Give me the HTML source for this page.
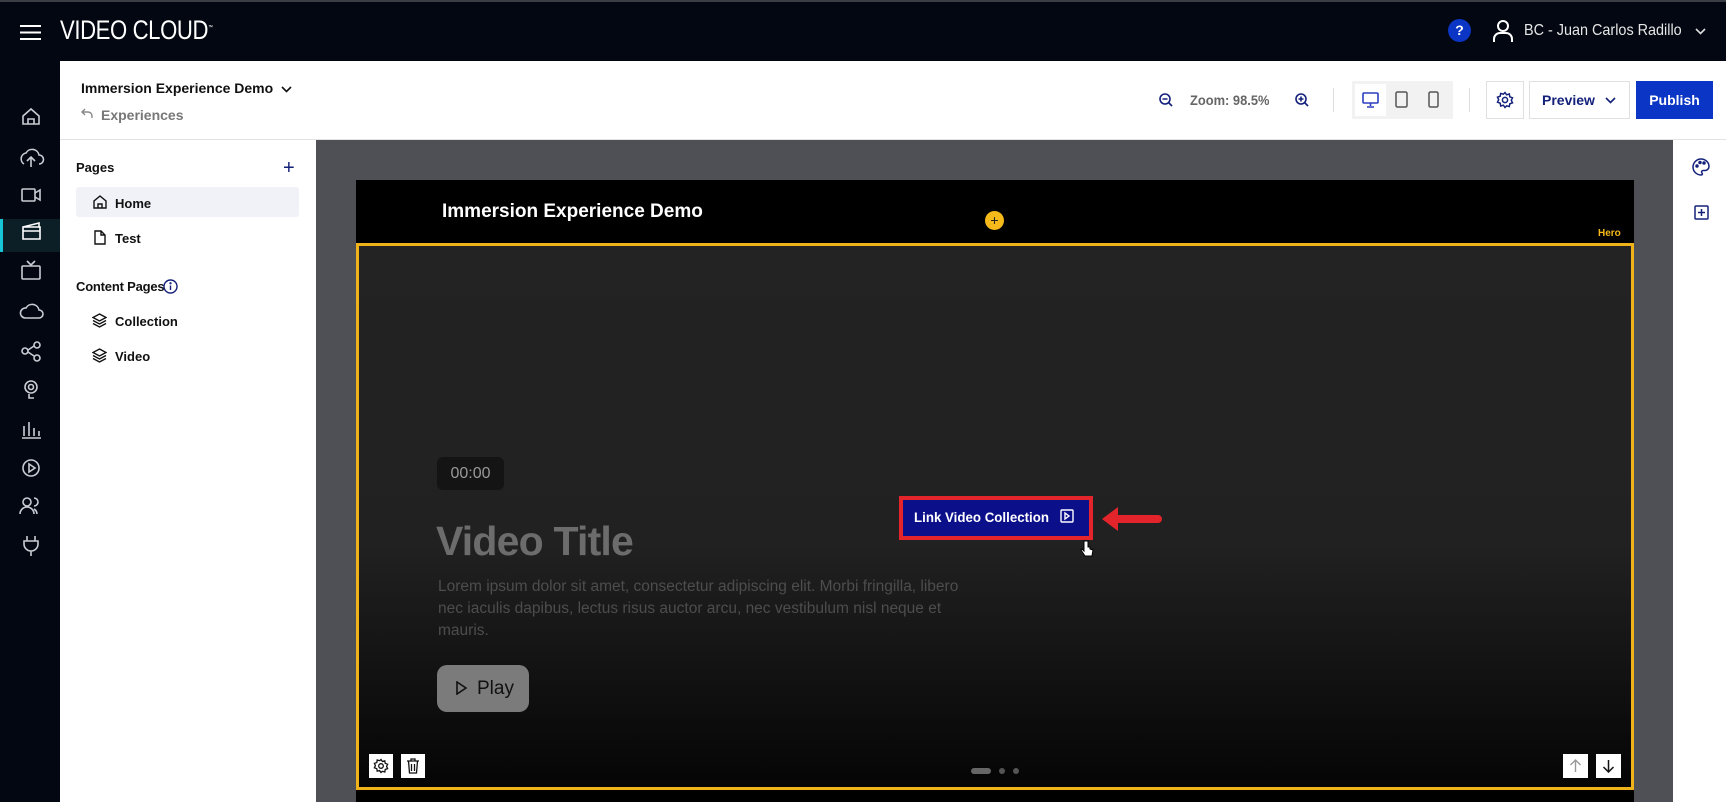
<!DOCTYPE html>
<html><head><meta charset="utf-8"><style>
*{margin:0;padding:0;box-sizing:border-box}
body{width:1726px;height:802px;overflow:hidden;font-family:"Liberation Sans",sans-serif;background:#fff;position:relative}
.a{position:absolute}
.top{left:0;top:0;width:1726px;height:61px;background:#030711;border-top:2px solid #3a3d44}
.nav{left:0;top:61px;width:60px;height:741px;background:#030711}
.hdr{left:60px;top:61px;width:1666px;height:79px;background:#fff;border-bottom:1px solid #e2e2e2}
.lp{left:60px;top:140px;width:256px;height:662px;background:#fff}
.canvas{left:316px;top:140px;width:1357px;height:662px;background:#4f5055}
.rp{left:1673px;top:140px;width:53px;height:662px;background:#fff}
svg{display:block}
.t{font-weight:bold;color:#111;font-size:13px}
</style></head><body>
<div class="a top"></div>
<svg class="a" style="left:20px;top:24px" width="21" height="17"><g stroke="#fff" stroke-width="2"><line x1="0" y1="2" x2="21" y2="2"/><line x1="0" y1="8.5" x2="21" y2="8.5"/><line x1="0" y1="15" x2="21" y2="15"/></g></svg>
<div class="a" style="left:60px;top:15px;color:#fff;font-size:27px;letter-spacing:-0.5px;transform:scaleX(0.82);transform-origin:left;font-weight:300">VIDEO CLOUD<sup style="font-size:6px">™</sup></div>
<div class="a" style="left:1448px;top:19px;width:23px;height:23px;border-radius:50%;background:#0b35c4;color:#fff;font-weight:bold;font-size:14px;text-align:center;line-height:23px">?</div>
<svg class="a" style="left:1492px;top:20px" width="22" height="22" fill="none" stroke="#fff" stroke-width="2"><circle cx="11" cy="6" r="5"/><path d="M2 22v-3a6 6 0 0 1 6-6h6a6 6 0 0 1 6 6v3"/></svg>
<div class="a" style="left:1524px;top:22px;color:#e6e6e6;font-size:16px;transform:scaleX(0.9);transform-origin:left;white-space:nowrap">BC - Juan Carlos Radillo</div>
<svg class="a" style="left:1695px;top:28px" width="11" height="7" fill="none" stroke="#ddd" stroke-width="1.6"><path d="M1 1l4.5 4.5L10 1"/></svg>

<div class="a nav"></div>
<div class="a" style="left:0;top:219px;width:60px;height:33px;background:#0c1f26"></div>
<div class="a" style="left:0;top:219px;width:3px;height:33px;background:#18c5d6"></div>
<svg class="a" style="left:0;top:100px" width="60" height="460" fill="none" stroke="#c9cdd3" stroke-width="1.6">
<path d="M23 24v-8l8-7 8 7v8zM28 24v-5h6v5"/>
<path d="M24 64a6 6 0 0 1 2-11 7 7 0 0 1 13 2 4 4 0 0 1 0 9M31 67v-10M27 61l4-4 4 4"/>
<rect x="22" y="89" width="13" height="12" rx="1"/><path d="M35 93l5-3v10l-5-3"/>
<path d="M23 127h17v12H23zM23 127l16-4v4M23 131h17" stroke="#fff"/>
<rect x="22" y="166" width="18" height="13" rx="1"/><path d="M27 161l4 4 4-4"/>
<path d="M25 218a5 5 0 0 1 1-10 7 7 0 0 1 13 2 4 4 0 0 1 0 8z"/>
<circle cx="25" cy="251" r="3"/><circle cx="37" cy="245" r="3"/><circle cx="37" cy="258" r="3"/><path d="M28 250l6-4M28 252l6 4"/>
<circle cx="31" cy="287" r="6"/><circle cx="31" cy="287" r="2.5"/><path d="M29 294v4h5"/>
<path d="M24 336v-10M29 336v-14M34 336v-8M39 336v-5M22 338h19"/>
<circle cx="31" cy="368" r="8"/><path d="M29 364v8l6-4z"/>
<circle cx="27" cy="402" r="4"/><path d="M20 414a7 7 0 0 1 14 0M34 398a4 4 0 0 1 0 8M37 414a6 6 0 0 0-3-5"/>
<path d="M27 436v5M35 436v5M24 441h14v3a7 7 0 0 1-14 0zM31 451v5"/>
</svg>

<div class="a hdr"></div>
<div class="a t" style="left:81px;top:80px;font-size:14px">Immersion Experience Demo</div>
<svg class="a" style="left:281px;top:86px" width="11" height="7" fill="none" stroke="#111" stroke-width="1.6"><path d="M1 1l4.5 4.5L10 1"/></svg>
<svg class="a" style="left:81px;top:108px" width="12" height="10" fill="none" stroke="#888" stroke-width="1.4"><path d="M4 1L1 4l3 3M1 4h6a4 4 0 0 1 4 4v2"/></svg>
<div class="a" style="left:101px;top:107px;color:#777;font-weight:bold;font-size:14px">Experiences</div>

<svg class="a" style="left:1159px;top:93px" width="14" height="14" fill="none" stroke="#14217a" stroke-width="1.6"><circle cx="6" cy="6" r="5"/><path d="M3.5 6h5M10 10l3 3"/></svg>
<div class="a" style="left:1190px;top:92px;color:#666;font-size:14px;font-weight:bold;transform:scaleX(0.92);transform-origin:left">Zoom: 98.5%</div>
<svg class="a" style="left:1295px;top:93px" width="14" height="14" fill="none" stroke="#14217a" stroke-width="1.6"><circle cx="6" cy="6" r="5"/><path d="M3.5 6h5M6 3.5v5M10 10l3 3"/></svg>
<div class="a" style="left:1333px;top:88px;width:1px;height:24px;background:#ddd"></div>
<div class="a" style="left:1352px;top:81px;width:101px;height:38px;background:#f2f2f2"></div>
<div class="a" style="left:1355px;top:84px;width:31px;height:32px;background:#fff"></div>
<svg class="a" style="left:1362px;top:92px" width="18" height="16" fill="none" stroke="#2a3fbf" stroke-width="1.6"><rect x="1" y="1" width="15" height="10" rx="1"/><path d="M8.5 11v3M5 15h7"/></svg>
<svg class="a" style="left:1395px;top:91px" width="14" height="18" fill="none" stroke="#555" stroke-width="1.5"><rect x="1" y="1" width="11" height="15" rx="1.5"/></svg>
<svg class="a" style="left:1428px;top:91px" width="12" height="18" fill="none" stroke="#555" stroke-width="1.5"><rect x="1" y="1" width="9" height="15" rx="1.5"/></svg>
<div class="a" style="left:1469px;top:88px;width:1px;height:24px;background:#ddd"></div>
<div class="a" style="left:1486px;top:81px;width:38px;height:38px;border:1px solid #e0e0e0;background:#fff"></div>
<svg class="a" style="left:1496px;top:91px" width="18" height="18" fill="none" stroke="#14217a" stroke-width="1.5"><circle cx="9" cy="9" r="2.6"/><path d="M9 1.5l1.6 2.3 2.7-.8.5 2.8 2.7 1-1.2 2.5 1.2 2.5-2.7 1-.5 2.8-2.7-.8L9 16.5l-1.6-2.3-2.7.8-.5-2.8-2.7-1L2.7 8.7 1.5 6.2l2.7-1 .5-2.8 2.7.8z"/></svg>
<div class="a" style="left:1529px;top:81px;width:101px;height:38px;border:1px solid #e0e0e0;background:#fff"></div>
<div class="a" style="left:1542px;top:92px;color:#14217a;font-weight:bold;font-size:14px">Preview</div>
<svg class="a" style="left:1605px;top:97px" width="11" height="7" fill="none" stroke="#14217a" stroke-width="1.6"><path d="M1 1l4.5 4.5L10 1"/></svg>
<div class="a" style="left:1636px;top:81px;width:77px;height:38px;background:#0b35c4;color:#fff;font-weight:bold;font-size:14px;text-align:center;line-height:38px">Publish</div>

<div class="a lp"></div>
<div class="a t" style="left:76px;top:160px">Pages</div>
<div class="a" style="left:283px;top:157px;color:#14217a;font-size:20px">+</div>
<div class="a" style="left:76px;top:187px;width:223px;height:30px;background:#f1f2f8;border-radius:3px"></div>
<svg class="a" style="left:93px;top:195px" width="14" height="14" fill="none" stroke="#111" stroke-width="1.4"><path d="M1 13V6l6-5 6 5v7zM5 13V9h4v4"/></svg>
<div class="a t" style="left:115px;top:196px">Home</div>
<svg class="a" style="left:94px;top:230px" width="12" height="15" fill="none" stroke="#111" stroke-width="1.4"><path d="M1 1h6l4 4v9H1zM7 1v4h4"/></svg>
<div class="a t" style="left:115px;top:231px">Test</div>
<div class="a t" style="left:76px;top:279px;letter-spacing:-0.2px">Content Pages</div>
<svg class="a" style="left:163px;top:279px" width="15" height="15" fill="none" stroke="#14217a" stroke-width="1.4"><circle cx="7.5" cy="7.5" r="6.5"/><path d="M7.5 6.5v4.5"/><circle cx="7.5" cy="4.3" r=".5"/></svg>
<svg class="a" style="left:92px;top:313px" width="15" height="15" fill="none" stroke="#111" stroke-width="1.4"><path d="M7.5 1L14 4.5 7.5 8 1 4.5zM1 7.5L7.5 11 14 7.5M1 10.5L7.5 14 14 10.5"/></svg>
<div class="a t" style="left:115px;top:314px">Collection</div>
<svg class="a" style="left:92px;top:348px" width="15" height="15" fill="none" stroke="#111" stroke-width="1.4"><path d="M7.5 1L14 4.5 7.5 8 1 4.5zM1 7.5L7.5 11 14 7.5M1 10.5L7.5 14 14 10.5"/></svg>
<div class="a t" style="left:115px;top:349px">Video</div>

<div class="a canvas"></div>
<div class="a" style="left:356px;top:180px;width:1278px;height:622px;background:#000"></div>
<div class="a" style="left:442px;top:201px;color:#fff;font-size:19px;font-weight:bold">Immersion Experience Demo</div>
<div class="a" style="left:985px;top:211px;width:19px;height:19px;border-radius:50%;background:#f5b91a;color:#222;text-align:center;font-size:14px;line-height:19px">+</div>
<div class="a" style="left:1598px;top:228px;color:#f5b91a;font-size:10px;font-weight:bold">Hero</div>
<div class="a" style="left:356px;top:243px;width:1278px;height:547px;border:3px solid #f0b21b;background:linear-gradient(#232323 0%,#212121 55%,#050505 100%)"></div>
<div class="a" style="left:437px;top:457px;width:67px;height:33px;background:#141414;border-radius:6px;color:#999;font-size:16px;text-align:center;line-height:33px">00:00</div>
<div class="a" style="left:436px;top:518px;color:#6c6c6c;font-size:41px;font-weight:bold;letter-spacing:-0.8px">Video Title</div>
<div class="a" style="left:438px;top:576px;width:548px;color:#4d4d4d;font-size:15.5px;line-height:22px">Lorem ipsum dolor sit amet, consectetur adipiscing elit. Morbi fringilla, libero nec iaculis dapibus, lectus risus auctor arcu, nec vestibulum nisl neque et mauris.</div>
<div class="a" style="left:437px;top:665px;width:92px;height:47px;background:#7b7b7b;border-radius:10px"></div>
<svg class="a" style="left:456px;top:681px" width="11" height="14" fill="none" stroke="#111" stroke-width="1.6"><path d="M1 1l9 6-9 6z"/></svg>
<div class="a" style="left:477px;top:678px;color:#111;font-size:19px">Play</div>
<div class="a" style="left:899px;top:496px;width:194px;height:44px;border:4px solid #e3242b;background:#0c0f8a"></div>
<div class="a" style="left:914px;top:509px;color:#fff;font-size:14px;font-weight:bold;transform:scaleX(0.95);transform-origin:left;white-space:nowrap">Link Video Collection</div>
<svg class="a" style="left:1060px;top:509px" width="14" height="14" fill="none" stroke="#fff" stroke-width="1.4"><rect x="1" y="1" width="12" height="12" rx="1"/><path d="M5 4v6l4-3z"/></svg>
<svg class="a" style="left:1100px;top:505px" width="62" height="28"><path d="M2 14L18 2v8h40a4 4 0 0 1 0 8H18v8z" fill="#e3242b"/></svg>
<svg class="a" style="left:1080px;top:540px" width="14" height="18"><path d="M4 1v10l-2-2-1 1 4 6h7l1-6-3-1V7H8V1z" fill="#fff" stroke="#000"/></svg>
<div class="a" style="left:369px;top:754px;width:24px;height:24px;background:#fff"></div>
<svg class="a" style="left:373px;top:758px" width="16" height="16" fill="none" stroke="#111" stroke-width="1.3"><circle cx="8" cy="8" r="2.3"/><path d="M8 1.5l1.4 2 2.4-.7.4 2.5 2.4.9-1 2.2 1 2.2-2.4.9-.4 2.5-2.4-.7L8 14.5l-1.4-2-2.4.7-.4-2.5-2.4-.9 1-2.2-1-2.2 2.4-.9.4-2.5 2.4.7z"/></svg>
<div class="a" style="left:401px;top:754px;width:24px;height:24px;background:#fff"></div>
<svg class="a" style="left:406px;top:758px" width="14" height="16" fill="none" stroke="#111" stroke-width="1.3"><path d="M1 3h12M5 3V1h4v2M2.5 3l1 12h7l1-12M5.5 6v7M8.5 6v7"/></svg>
<div class="a" style="left:971px;top:768px;width:20px;height:6px;border-radius:3px;background:#666"></div>
<div class="a" style="left:999px;top:768px;width:6px;height:6px;border-radius:3px;background:#555"></div>
<div class="a" style="left:1013px;top:768px;width:6px;height:6px;border-radius:3px;background:#555"></div>
<div class="a" style="left:1563px;top:754px;width:25px;height:24px;background:#fff"></div>
<svg class="a" style="left:1569px;top:759px" width="13" height="14" fill="none" stroke="#999" stroke-width="1.4"><path d="M6.5 13V1M1.5 6l5-5 5 5"/></svg>
<div class="a" style="left:1596px;top:754px;width:25px;height:24px;background:#fff"></div>
<svg class="a" style="left:1602px;top:759px" width="13" height="14" fill="none" stroke="#111" stroke-width="1.5"><path d="M6.5 1v12M1.5 8l5 5 5-5"/></svg>

<div class="a rp"></div>
<svg class="a" style="left:1692px;top:158px" width="18" height="18" fill="none" stroke="#14217a" stroke-width="1.5"><path d="M9 1a8 8 0 0 0 0 16c1.5 0 1.8-1.2 1-2-1-1-.3-2.5 1-2.5h2a4 4 0 0 0 4-4A8 7.5 0 0 0 9 1z"/><circle cx="5" cy="8" r="1" fill="#14217a"/><circle cx="8" cy="4.5" r="1" fill="#14217a"/><circle cx="12" cy="5" r="1" fill="#14217a"/></svg>
<svg class="a" style="left:1694px;top:205px" width="15" height="15" fill="none" stroke="#14217a" stroke-width="1.5"><rect x="1" y="1" width="13" height="13" rx="1"/><path d="M7.5 4v7M4 7.5h7"/></svg>
</body></html>
